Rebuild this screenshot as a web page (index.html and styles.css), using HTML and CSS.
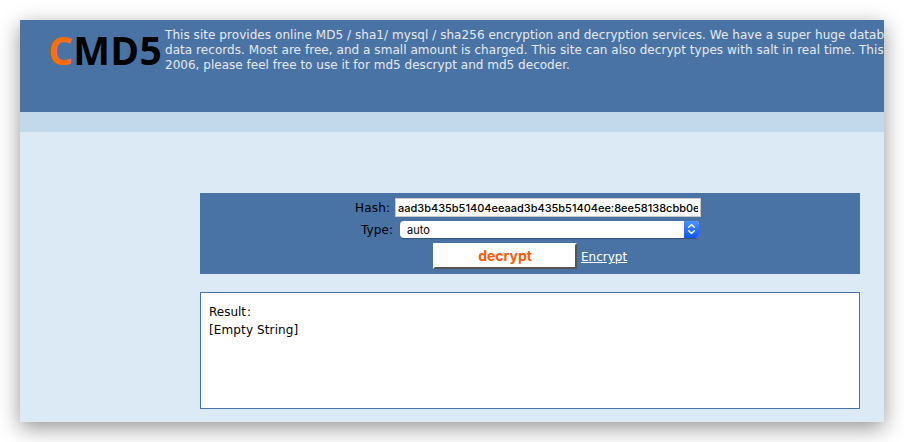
FILE: index.html
```html
<!DOCTYPE html>
<html lang="en">
<head>
<meta charset="utf-8">
<title>CMD5</title>
<link rel="stylesheet" href="styles.css">
</head>
<body>
<div class="window">
  <header class="header">
    <div class="logo"><span class="logo-c">C</span>MD5</div>
    <p class="intro">
      <span class="line line-1">This site provides online MD5 / sha1/ mysql / sha256 encryption and decryption services. We have a super huge datab</span>
      <span class="line line-2">data records. Most are free, and a small amount is charged. This site can also decrypt types with salt in real time. This</span>
      <span class="line line-3">2006, please feel free to use it for md5 descrypt and md5 decoder.</span>
    </p>
  </header>
  <nav class="band"></nav>
  <main class="content">
    <form class="form">
      <div class="row row-hash">
        <label class="label">Hash:</label>
        <div class="hash"><span class="hash-text">aad3b435b51404eeaad3b435b51404ee:8ee58138cbb0e</span></div>
      </div>
      <div class="row row-type">
        <label class="label">Type:</label>
        <div class="select">
          <span class="select-text">auto</span>
          <span class="stepper"><svg width="15" height="16" viewBox="0 0 15 16"><path d="M4.7 6.2 7.5 3.5l2.8 2.7M4.7 9.8l2.8 2.7 2.8-2.7" fill="none" stroke="#fff" stroke-width="1.4" stroke-linecap="round" stroke-linejoin="round"/></svg></span>
        </div>
      </div>
      <div class="row row-submit">
        <button type="button" class="button">decrypt</button>
        <a class="encrypt">Encrypt</a>
      </div>
    </form>
    <section class="result">
      <div class="result-title">Result<span class="colon">:</span></div>
      <div class="result-text">[Empty String]</div>
    </section>
  </main>
</div>
</body>
</html>
```
FILE: styles.css
```css
* { box-sizing: border-box; }
body {
  margin: 0;
  padding: 20px;
  height: 442px;
  overflow: hidden;
  background: #fff;
  font: 12px/15px Verdana, "DejaVu Sans", sans-serif;
  color: #000;
}
.window {
  width: 864px;
  height: 402px;
  background: #dceaf5;
  box-shadow: 0 6px 20px rgba(0, 0, 0, .42);
}
.header {
  display: flex;
  height: 92px;
  padding: 8px 0 0 28px;
  overflow: hidden;
  background: #4a73a5;
}
.logo {
  width: 117px;
  flex: none;
  margin-top: -2px;
  font: 700 39px/48px "Open Sans", sans-serif;
  letter-spacing: .3px;
  white-space: nowrap;
}
.logo-c { color: #ff6c0a; }
.intro { margin: 0; color: #e6e9ee; flex: none; }
.line { display: block; white-space: nowrap; }
.line-1 { letter-spacing: .054px; }
.line-2 { letter-spacing: .05px; }
.line-3 { letter-spacing: .02px; }
.band { height: 20px; background: #c2d9eb; }
.content { padding: 61px 24px 0 180px; }
.form {
  height: 81px;
  padding-top: 5px;
  background: #4a73a5;
}
.row { display: flex; }
.label { line-height: 20px; letter-spacing: .2px; }
.row-hash { height: 20px; padding-left: 155px; }
.row-hash .label { width: 40px; }
.hash {
  width: 306px;
  height: 19px;
  padding: 0 2px;
  border: 1px solid #c8c8c8;
  background: #fff;
  font: 500 11px/19px Inter, sans-serif;
}
.hash-text { display: block; overflow: hidden; white-space: nowrap; letter-spacing: -.01px; }
.row-type { height: 25px; padding: 3px 0 0 161px; }
.row-type .label { width: 39px; line-height: 18px; letter-spacing: .1px; }
.select {
  display: flex;
  justify-content: space-between;
  width: 299px;
  height: 17px;
  padding-left: 7px;
  overflow: hidden;
  border-radius: 4px;
  background: #fff;
  box-shadow: 0 1px 1px rgba(0, 0, 0, .3);
  font: 11px/18px Inter, sans-serif;
}
.stepper { display: flex; width: 15px; background: linear-gradient(#4c93ff, #0e55fb); }
.row-submit { padding-left: 233px; }
.button {
  width: 144px;
  height: 26px;
  padding: 0;
  border: 2px solid;
  border-color: #fff #555 #555 #fff;
  background: #fff;
  color: #ff5a0a;
  font: 700 14px/20px Inter, sans-serif;
}
.encrypt { margin-left: 4px; color: #fff; line-height: 28px; text-decoration: underline; }
.result {
  height: 117px;
  margin-top: 18px;
  padding: 10px 8px;
  border: 1px solid #4a73a5;
  background: #fff;
  line-height: 18px;
}
.result-text { letter-spacing: .12px; }
.colon { margin-left: 1px; }
```
